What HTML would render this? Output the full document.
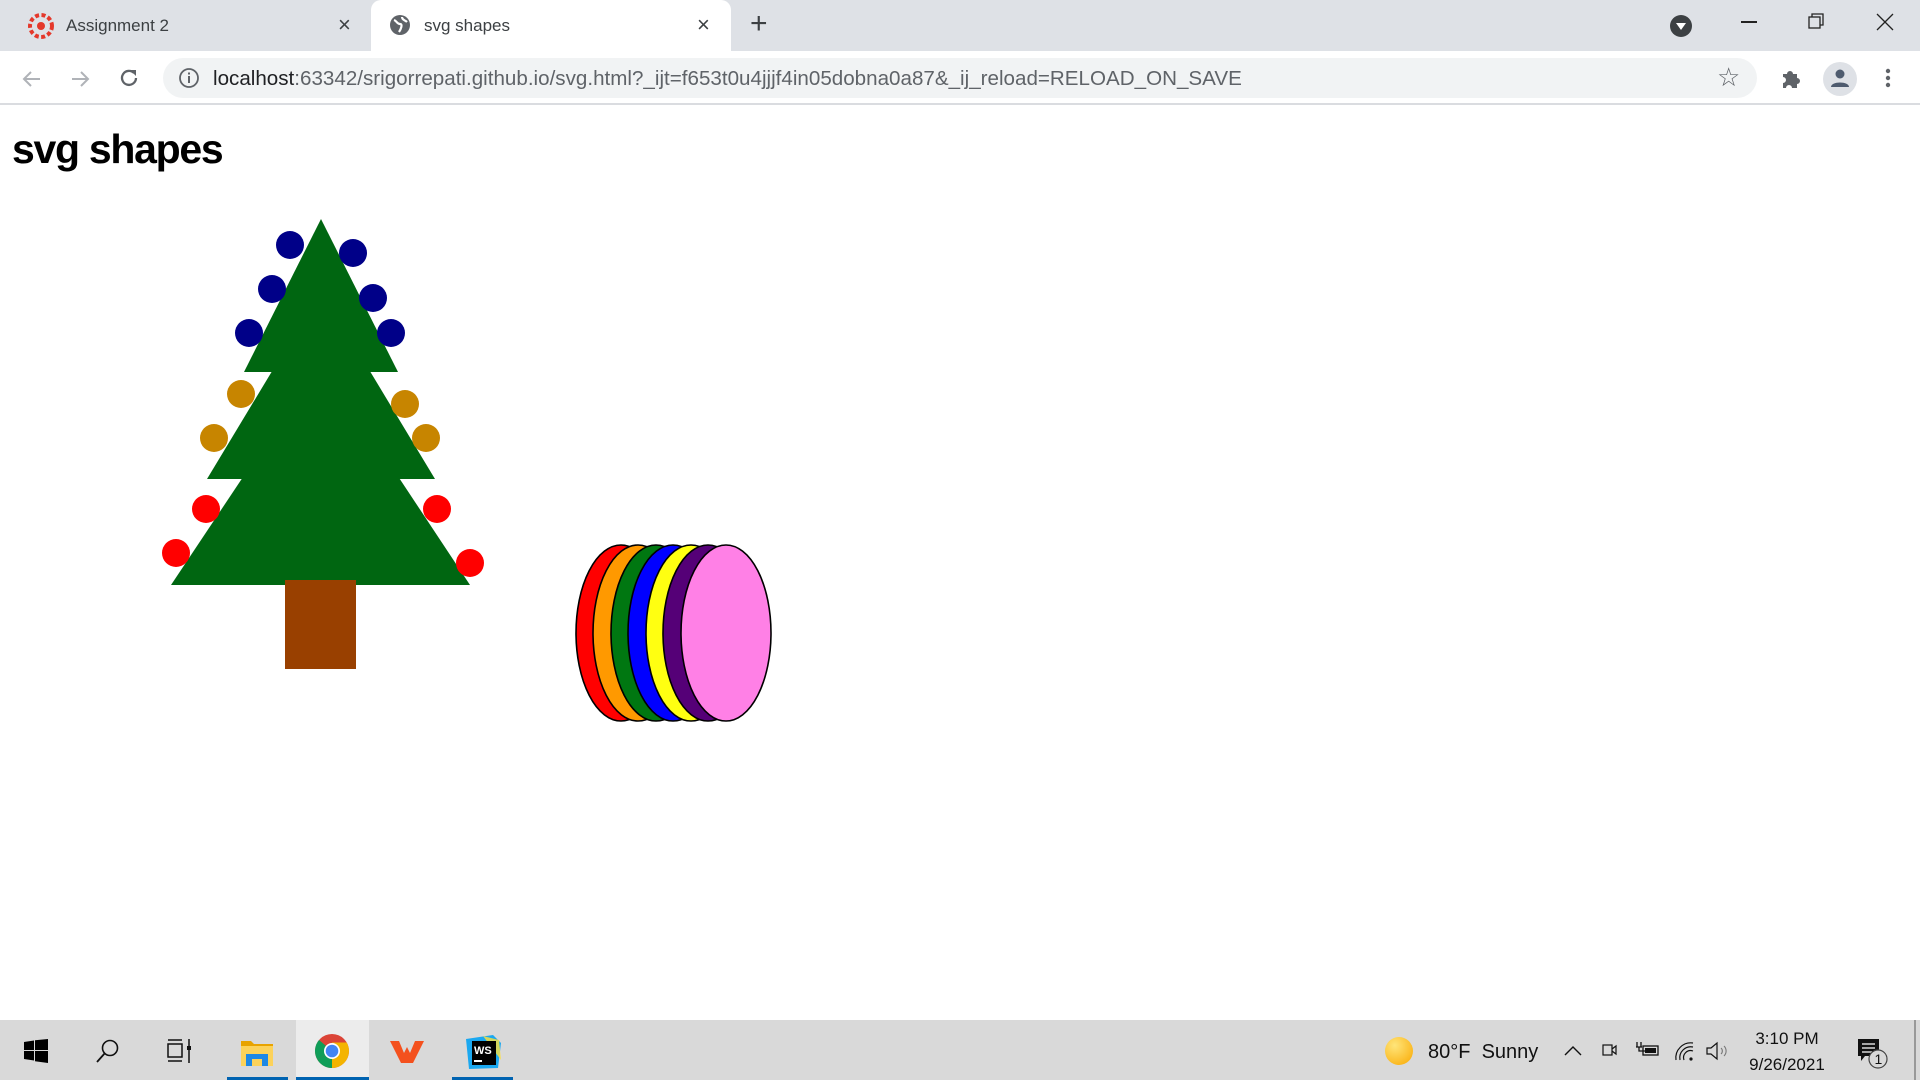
<!DOCTYPE html>
<html><head><meta charset="utf-8"><style>
*{margin:0;padding:0;box-sizing:border-box}
body{width:1920px;height:1080px;overflow:hidden;background:#fff;font-family:"Liberation Sans",sans-serif;position:relative}
.abs{position:absolute}
</style></head><body>
<!-- tab bar -->
<div class="abs" style="left:0;top:0;width:1920px;height:51px;background:#dee1e6"></div>
<div class="abs" style="left:371px;top:0;width:360px;height:52px;background:#fff;border-radius:10px 10px 0 0"></div>
<svg class="abs" style="left:28px;top:13px" width="26" height="26" viewBox="0 0 26 26"><circle cx="13" cy="13" r="11" fill="none" stroke="#e4382b" stroke-width="4" stroke-dasharray="4 2.5"/><circle cx="13" cy="13" r="4" fill="#e4382b"/></svg>
<div class="abs" style="left:66px;top:16px;font-size:17px;color:#3c4043">Assignment 2</div>
<div class="abs" style="left:338px;top:12px;font-size:22px;color:#3c4043">×</div>
<svg class="abs" style="left:389px;top:14px" width="22" height="22" viewBox="0 0 22 22"><circle cx="11" cy="11" r="10" fill="#5f6368"/><path d="M5 6c3 1 3 4 6 4s1 5 -1 8M13 3c0 3 3 3 5 5" stroke="#fff" stroke-width="2.2" fill="none"/></svg>
<div class="abs" style="left:424px;top:16px;font-size:17px;color:#3c4043">svg shapes</div>
<div class="abs" style="left:697px;top:12px;font-size:22px;color:#3c4043">×</div>
<div class="abs" style="left:750px;top:7px;font-size:30px;color:#3c4043">+</div>
<svg class="abs" style="left:1669px;top:14px" width="24" height="24"><circle cx="12" cy="12" r="11" fill="#3c4043"/><path d="M7 9h10l-5 7z" fill="#fff"/></svg>
<div class="abs" style="left:1741px;top:21px;width:16px;height:1.5px;background:#222"></div>
<svg class="abs" style="left:1808px;top:13px" width="18" height="18"><rect x="1" y="4" width="11" height="11" fill="none" stroke="#222" stroke-width="1.3"/><path d="M4 4V1h11v11h-3" fill="none" stroke="#222" stroke-width="1.3"/></svg>
<svg class="abs" style="left:1876px;top:13px" width="18" height="18"><path d="M1 1L17 17M17 1L1 17" stroke="#222" stroke-width="1.3"/></svg>
<!-- toolbar -->
<div class="abs" style="left:0;top:51px;width:1920px;height:54px;background:#fff;border-bottom:2px solid #dadce0"></div>
<svg class="abs" style="left:20px;top:67px" width="24" height="24"><path d="M20 12H5M11 5l-7 7 7 7" stroke="#b0b3b8" stroke-width="2" fill="none"/></svg>
<svg class="abs" style="left:68px;top:67px" width="24" height="24"><path d="M4 12h15M13 5l7 7-7 7" stroke="#b0b3b8" stroke-width="2" fill="none"/></svg>
<svg class="abs" style="left:117px;top:66px" width="24" height="24"><path d="M19 12a7 7 0 1 1-2-5" stroke="#5f6368" stroke-width="2.3" fill="none"/><path d="M13 4h6v6z" fill="#5f6368"/></svg>
<div class="abs" style="left:163px;top:58px;width:1594px;height:40px;background:#f1f3f4;border-radius:20px"></div>
<svg class="abs" style="left:178px;top:67px" width="22" height="22"><circle cx="11" cy="11" r="9" fill="none" stroke="#5f6368" stroke-width="1.8"/><rect x="10" y="9" width="2" height="7" fill="#5f6368"/><rect x="10" y="5.5" width="2" height="2" fill="#5f6368"/></svg>
<div class="abs" style="left:213px;top:67px;font-size:20.6px;color:#5f6368;white-space:nowrap"><span style="color:#202124">localhost</span>:63342/srigorrepati.github.io/svg.html?_ijt=f653t0u4jjjf4in05dobna0a87&amp;_ij_reload=RELOAD_ON_SAVE</div>
<div class="abs" style="left:1717px;top:62px;font-size:26px;color:#5f6368">☆</div>
<svg class="abs" style="left:1779px;top:66px" width="24" height="24"><path d="M4 8h4a3 3 0 0 1 6 0h4v4a3 3 0 0 1 0 6v4h-5a3 3 0 0 0-6 0H4v-5a3 3 0 0 0 0-6z" fill="#5f6368"/></svg>
<div class="abs" style="left:1823px;top:62px;width:34px;height:34px;border-radius:50%;background:#dee1e6"></div>
<svg class="abs" style="left:1829px;top:67px" width="22" height="22"><circle cx="11" cy="7" r="4.5" fill="#4e5b6e"/><path d="M2 20c0-6 18-6 18 0z" fill="#4e5b6e"/></svg>
<svg class="abs" style="left:1880px;top:66px" width="16" height="24"><circle cx="8" cy="5" r="2.2" fill="#5f6368"/><circle cx="8" cy="12" r="2.2" fill="#5f6368"/><circle cx="8" cy="19" r="2.2" fill="#5f6368"/></svg>
<!-- content -->
<div class="abs" style="left:12px;top:126px;font-size:41px;font-weight:bold;color:#000;letter-spacing:-1.3px">svg shapes</div>
<svg class="abs" style="left:0;top:0" width="900" height="760">
<polygon points="321,360 171,585 470,585" fill="#006611"/>
<polygon points="321,290 207,479 435,479" fill="#006611"/>
<polygon points="321,219 244,372 398,372" fill="#006611"/>
<rect x="285" y="580" width="71" height="89" fill="#994000"/>
<g fill="#000088"><circle cx="290" cy="245" r="14"/><circle cx="353" cy="253" r="14"/><circle cx="272" cy="289" r="14"/><circle cx="373" cy="298" r="14"/><circle cx="249" cy="333" r="14"/><circle cx="391" cy="333" r="14"/></g>
<g fill="#c78500"><circle cx="241" cy="394" r="14"/><circle cx="405" cy="404" r="14"/><circle cx="214" cy="438" r="14"/><circle cx="426" cy="438" r="14"/></g>
<g fill="#ff0000"><circle cx="206" cy="509" r="14"/><circle cx="437" cy="509" r="14"/><circle cx="176" cy="553" r="14"/><circle cx="470" cy="563" r="14"/></g>
<g stroke="#000" stroke-width="1.6">
<ellipse cx="621" cy="633" rx="45" ry="88" fill="#ff0000"/>
<ellipse cx="638" cy="633" rx="45" ry="88" fill="#ff9900"/>
<ellipse cx="656" cy="633" rx="45" ry="88" fill="#007711"/>
<ellipse cx="673" cy="633" rx="45" ry="88" fill="#0000ff"/>
<ellipse cx="691" cy="633" rx="45" ry="88" fill="#ffff11"/>
<ellipse cx="708" cy="633" rx="45" ry="88" fill="#550077"/>
<ellipse cx="726" cy="633" rx="45" ry="88" fill="#ff80e6"/>
</g>
</svg>
<!-- taskbar -->
<div class="abs" style="left:0;top:1020px;width:1920px;height:60px;background:#d9d9d9"></div>
<div class="abs" style="left:296px;top:1020px;width:73px;height:60px;background:#ececec"></div>
<div class="abs" style="left:227px;top:1077px;width:61px;height:3px;background:#0063b1"></div>
<div class="abs" style="left:296px;top:1077px;width:73px;height:3px;background:#0063b1"></div>
<div class="abs" style="left:452px;top:1077px;width:61px;height:3px;background:#0063b1"></div>
<svg class="abs" style="left:24px;top:1039px" width="24" height="24"><path d="M0 3l10-1.5V11H0zM11 1.3L24 0v11H11zM0 12h10v9.5L0 20zM11 12h13v12l-13-1.8z" fill="#000"/></svg>
<svg class="abs" style="left:95px;top:1038px" width="26" height="26"><circle cx="15" cy="10" r="7.5" fill="none" stroke="#111" stroke-width="1.6"/><path d="M10 15L2 24" stroke="#111" stroke-width="1.8"/></svg>
<svg class="abs" style="left:167px;top:1038px" width="26" height="26"><rect x="1" y="6" width="14" height="13" fill="none" stroke="#111" stroke-width="1.5"/><path d="M1 2h14M1 23h14M22 1v24" stroke="#111" stroke-width="1.5"/><rect x="20" y="8" width="4" height="4" fill="#111"/></svg>
<svg class="abs" style="left:240px;top:1038px" width="34" height="30"><path d="M1 3h10l3 3h19v22H1z" fill="#e8a300"/><rect x="1" y="8" width="32" height="20" fill="#fcd25a"/><path d="M6 28V16h22v12h-6v-7h-10v7z" fill="#1e88e5"/></svg>
<svg class="abs" style="left:314px;top:1033px" width="36" height="36" viewBox="0 0 36 36"><circle cx="18" cy="18" r="17" fill="#db4437"/><path d="M18 18L3.3 26.5A17 17 0 0 0 18 35h0z" fill="#0f9d58"/><path d="M18 18L18 35A17 17 0 0 0 32.7 9.5L18 9.5z" fill="#f4b400"/><path d="M18 18L3.3 26.5A17 17 0 0 1 5 7z" fill="#0f9d58"/><circle cx="18" cy="18" r="8" fill="#fff"/><circle cx="18" cy="18" r="6.3" fill="#4285f4"/></svg>
<svg class="abs" style="left:389px;top:1039px" width="36" height="26"><path d="M1 2h9l5 12 3-6 3 6 5-12h9L24 24h-6l-0-4-0 4h-6z" fill="#f4511e"/></svg>
<svg class="abs" style="left:463px;top:1034px" width="40" height="36"><path d="M3 5L30 1l8 8-3 25L6 35z" fill="#1ba8f0"/><path d="M20 2l16 4 2 20z" fill="#ffe03a" opacity=".8"/><rect x="9" y="7" width="24" height="24" fill="#000"/><text x="11" y="20" font-size="11" font-weight="bold" fill="#fff" font-family="Liberation Sans">WS</text><rect x="11" y="26" width="8" height="2" fill="#fff"/></svg>
<div class="abs" style="left:1385px;top:1037px;width:28px;height:28px;border-radius:50%;background:radial-gradient(circle at 35% 30%,#ffe57a,#f9a800)"></div>
<div class="abs" style="left:1428px;top:1041px;font-size:20px;color:#111">80°F&nbsp; Sunny</div>
<svg class="abs" style="left:1563px;top:1043px" width="20" height="14"><path d="M2 12l8-8 8 8" stroke="#111" stroke-width="1.4" fill="none"/></svg>
<svg class="abs" style="left:1600px;top:1039px" width="20" height="22"><rect x="3" y="6" width="9" height="10" fill="none" stroke="#111" stroke-width="1.2"/><path d="M12 10l4-3v8l-4-3" fill="none" stroke="#111" stroke-width="1.2"/></svg>
<svg class="abs" style="left:1634px;top:1041px" width="26" height="18"><path d="M3 1v5M7 1v5M2 6h6M5 6v4h6" stroke="#111" stroke-width="1.3" fill="none"/><rect x="9" y="5" width="15" height="9" fill="none" stroke="#111" stroke-width="1.3"/><rect x="11" y="7" width="11" height="5" fill="#111"/></svg>
<svg class="abs" style="left:1673px;top:1040px" width="24" height="22"><path d="M3 20a15 15 0 0 1 17-17M7 20a11 11 0 0 1 13-13M11 20a7 7 0 0 1 9-9" stroke="#111" stroke-width="1.2" fill="none"/><circle cx="18" cy="19" r="1.6" fill="#111"/></svg>
<svg class="abs" style="left:1705px;top:1040px" width="26" height="22"><path d="M2 8h4l6-5v16l-6-5H2z" fill="none" stroke="#111" stroke-width="1.2"/><path d="M16 8a4 4 0 0 1 0 6M19 6a7 7 0 0 1 0 10" stroke="#777" stroke-width="1.1" fill="none"/></svg>
<div class="abs" style="left:1742px;top:1026px;width:90px;text-align:center;font-size:17px;color:#111;line-height:26px">3:10 PM<br>9/26/2021</div>
<svg class="abs" style="left:1856px;top:1036px" width="34" height="36"><path d="M2 3h21v17H9l-4 5v-5H2z" fill="#111"/><path d="M6 8h13M6 12h13M6 16h10" stroke="#fff" stroke-width="1.3"/><circle cx="22" cy="23" r="9" fill="#d9d9d9" stroke="#444" stroke-width="1.2"/><text x="18.5" y="28" font-size="14" fill="#111" font-family="Liberation Sans">1</text></svg>
<div class="abs" style="left:1914px;top:1020px;width:2px;height:60px;background:#999"></div>
</body></html>
